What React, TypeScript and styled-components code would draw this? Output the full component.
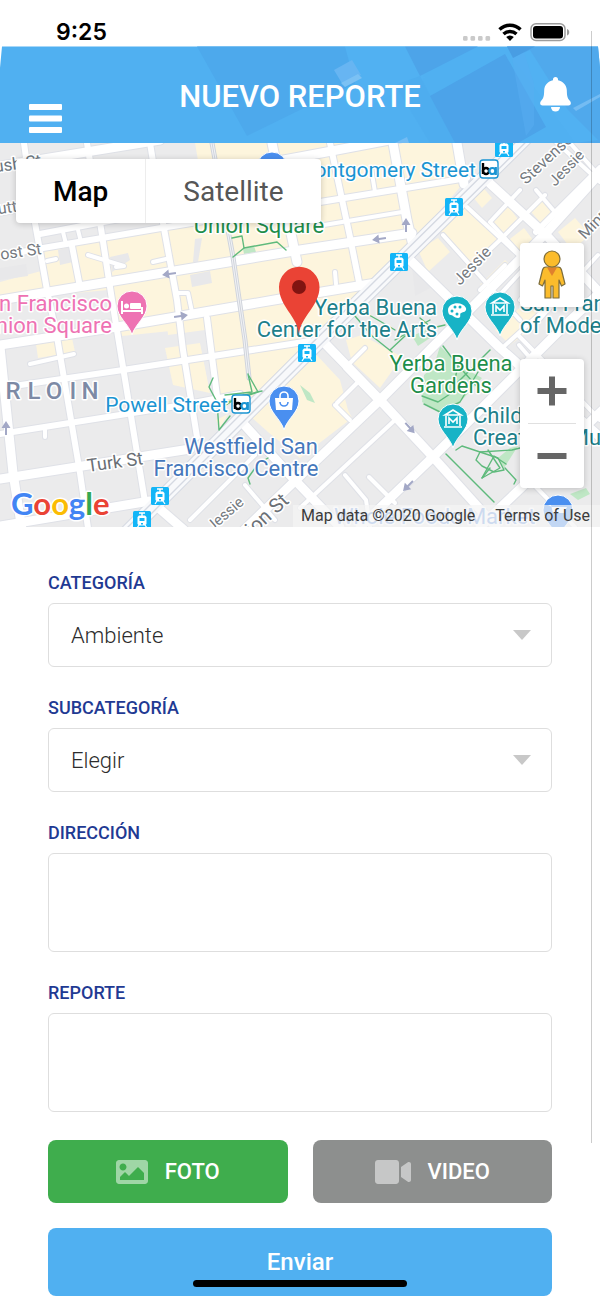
import React from "react";
import styled, { createGlobalStyle } from "styled-components";
import { FaImage, FaVideo } from "react-icons/fa";

const GlobalStyle = createGlobalStyle`
  * { box-sizing: border-box; }
  body { margin: 0; background: #fff; font-family: Roboto, "Liberation Sans", sans-serif; }
  button, select, textarea { font: inherit; }
`;

const Page = styled.div`
  position: relative;
  display: flex;
  flex-direction: column;
  min-height: 100vh;
`;

/* Status bar */
const StatusBar = styled.div`
  display: flex;
  align-items: center;
  justify-content: space-between;
  height: 46px;
  padding: 18px 30px 0 56px;
`;
const Clock = styled.time`
  font: 600 23px/28px Inter, sans-serif;
  color: #000;
`;
const StatusIcons = styled.svg`
  display: block;
  width: 108px;
  height: 20px;
`;

/* Header */
const Header = styled.header`
  position: relative;
  display: grid;
  grid-template-columns: 72px 1fr 72px;
  align-items: center;
  height: 97px;
  padding: 0 9px;
  overflow: hidden;
`;
const HeaderArt = styled.svg`
  position: absolute;
  inset: 0;
  width: 100%;
  height: 100%;
`;
const IconButton = styled.button<{ $low?: boolean }>`
  position: relative;
  display: flex;
  justify-content: center;
  align-self: ${(p) => (p.$low ? "end" : "center")};
  padding: ${(p) => (p.$low ? "10px 0" : "0")};
  border: 0;
  background: none;
`;
const Title = styled.h1`
  position: relative;
  margin: 0;
  padding-top: 4px;
  text-align: center;
  color: #fff;
  font-size: 31px;
  line-height: 40px;
  font-weight: 500;
`;

/* Map */
const MapArea = styled.section`
  position: relative;
  height: 384px;
  overflow: hidden;
  background: #ececec;
`;
const MapDrawing = styled.svg`
  display: block;
  width: 100%;
  height: 100%;
`;
const MapTypes = styled.div`
  position: absolute;
  top: 16px;
  left: 16px;
  display: flex;
  background: #fff;
  border-radius: 4px;
  box-shadow: 0 1px 6px rgba(0, 0, 0, 0.2);
`;
const MapType = styled.button<{ $on?: boolean }>`
  height: 64px;
  padding: 0 37px;
  border: 0;
  border-left: ${(p) => (p.$on ? "0" : "1px solid #ededed")};
  background: none;
  font-size: 28px;
  font-weight: ${(p) => (p.$on ? 500 : 400)};
  color: ${(p) => (p.$on ? "#000" : "#565656")};
`;
const MapTools = styled.div`
  position: absolute;
  top: 100px;
  right: 16px;
  display: flex;
  flex-direction: column;
  gap: 52px;
`;
const ToolCard = styled.div`
  display: flex;
  flex-direction: column;
  align-items: center;
  width: 64px;
  background: #fff;
  border-radius: 4px;
  box-shadow: 0 1px 6px rgba(0, 0, 0, 0.2);
`;
const ToolButton = styled.button`
  display: flex;
  align-items: center;
  justify-content: center;
  width: 64px;
  height: 64px;
  padding: 0;
  border: 0;
  background: none;
`;
const ToolRule = styled.hr`
  width: 48px;
  height: 1px;
  margin: 0;
  border: 0;
  background: #e0e0e0;
`;
const Attribution = styled.div`
  position: absolute;
  right: 0;
  bottom: 0;
  display: flex;
  gap: 20px;
  padding: 0 10px 0 8px;
  background: rgba(245, 245, 245, 0.7);
  font-size: 16px;
  line-height: 22px;
  color: #3c3c3c;
`;
const TermsLink = styled.a`
  color: inherit;
  text-decoration: none;
`;

/* Form */
const Form = styled.form`
  display: flex;
  flex-direction: column;
  gap: 28px;
  padding: 43px 48px 3px;
`;
const Field = styled.div`
  display: flex;
  flex-direction: column;
  gap: 7px;
`;
const Label = styled.label`
  color: #1f3a93;
  font-size: 18px;
  line-height: 26px;
  font-weight: 500;
`;
const SelectBox = styled.div`
  position: relative;
  display: flex;
`;
const Select = styled.select`
  flex: 1;
  height: 64px;
  padding: 0 22px;
  appearance: none;
  border: 1px solid #dedede;
  border-radius: 6px;
  background: #fff;
  color: #2c2c2c;
  font-size: 22px;
  font-weight: 300;
`;
const Caret = styled.svg`
  position: absolute;
  right: 21px;
  top: 27px;
  width: 18px;
  height: 10px;
  pointer-events: none;
`;
const TextArea = styled.textarea`
  display: block;
  height: 99px;
  padding: 16px 22px;
  resize: none;
  border: 1px solid #dedede;
  border-radius: 6px;
  background: #fff;
  color: #2c2c2c;
  font-size: 22px;
  font-weight: 300;
`;
const Actions = styled.div`
  display: flex;
  flex-direction: column;
  gap: 25px;
`;
const MediaRow = styled.div`
  display: grid;
  grid-template-columns: 1fr 1fr;
  gap: 25px;
`;
const ActionButton = styled.button<{ $color: string; $tall?: boolean }>`
  display: flex;
  align-items: center;
  justify-content: center;
  gap: 17px;
  height: ${(p) => (p.$tall ? 68 : 63)}px;
  border: 0;
  border-radius: 8px;
  background: ${(p) => p.$color};
  color: #fff;
  font-size: ${(p) => (p.$tall ? 24 : 22)}px;
  font-weight: 500;
  svg { color: rgba(255, 255, 255, 0.5); }
`;

const ScrollLine = styled.div`
  position: absolute;
  top: 31px;
  right: 8px;
  bottom: 156px;
  width: 1px;
  background: rgba(0, 0, 0, 0.2);
`;
const HomeIndicator = styled.div`
  position: fixed;
  left: 50%;
  bottom: 12px;
  width: 214px;
  height: 7px;
  border-radius: 4px;
  background: #000;
  transform: translateX(-50%);
`;

/* Map data: road centre lines */
const WIDE = [
  "M0 300L300 250L412 233", "M0 345L117 327L280 299L376 283", "M0 479L190 449",
  "M0 526L150 501", "M0 347L13 473L22 530", "M272 143L297 262", "M393 143L407 220L414 250",
  "M457 143L464 184", "M484 178L547 236L610 304", "M405 255L500 348L610 446",
  "M312 330L380 400L433 457L496 527", "M240 420L290 475L340 527", "M153 503L184 530",
  "M612 160L547 232L380 400L300 476L240 534", "M610 283L560 330L433 457L360 527",
  "M610 403L480 527", "M0 166L160 140", "M0 211L300 157L400 138",
];
const MEDIUM = [
  "M0 256L43 248L167 227L320 202L467 178", "M0 388L123 370L310 341", "M0 434L183 405L240 394",
  "M24 143L35 223L47 290L57 337L80 473L88 528", "M87 143L100 222L112 300L123 367L145 502",
  "M150 143L163 223L177 300L183 350L197 437", "M207 318L217 396", "M330 143L350 237L360 287",
  "M72 246L80 287", "M40 234L103 222L200 205", "M536 232L600 168",
];
const NARROW = [
  "M318 226L402 212", "M63 232L66 244", "M78 230L81 242",
  "M116 267L124 266L88 255", "M153 262L166 259", "M47 261L56 259", "M30 364L74 354", "M177 293L188 293L192 312",
  "M371 168L375 192", "M443 235L488 285L520 320", "M467 207L540 275L520 300",
  "M520 190L490 222L540 276", "M536 190L560 218", "M570 143L610 188", "M545 132L600 182",
  "M519 345L562 395", "M460 278L500 240L545 195", "M505 265L480 290", "M495 300L530 262",
  "M598 255L555 302L530 330", "M337 403L358 382", "M365 348L345 368L374 398",
  "M335 405L350 420", "M395 420L300 508", "M345 475L366 500L370 527", "M369 477L395 503",
  "M255 455L190 520", "M245 485L275 520", "M335 272L336 284", "M45 430L45 437",
  "M518 335L560 378L600 420", "M536 487L575 527", "M500 350L555 300",
];
const YELLOW = [
  "M195 143L458 143L466 180L408 248L245 410L220 398L216 392L205 330L168 335L160 240L206 207Z",
  "M43 250L206 223L206 320L118 325L108 290L0 300L0 282L45 270Z",
  "M165 348L200 343L210 393L173 385Z", "M36 344L72 338L75 352L38 358Z",
  "M118 325L178 316L180 330L122 336Z", "M312 350L340 380L348 410L352 418L300 458L268 432L248 414Z",
  "M346 340L362 335L402 357L380 388L352 362Z", "M437 226L468 206L498 240L470 270Z",
  "M418 250L438 238L450 252L428 272Z", "M472 196L480 184L492 198L482 208Z",
  "M490 218L508 206L520 222L500 236Z", "M528 208L540 196L556 220L545 228Z",
  "M506 242L524 228L536 244L518 258Z", "M558 232L575 218L590 235L572 250Z",
  "M480 285L505 260L515 270L490 298Z", "M495 330L545 285L530 330L510 345Z",
  "M216 420L228 414L220 428Z",
];
const GREY = [
  "M58 250L70 247L73 262L60 265Z", "M110 257L128 253L130 260L112 272Z", "M195 239L202 238L198 262L193 262Z",
  "M190 275L210 271L212 283L192 287Z", "M46 328L110 318L114 326L50 336Z", "M0 268L26 264L28 276L0 280Z",
  "M412 265L436 285L415 296Z",
];
const PATHS = [
  "M232 238L242 236L244 248L277 242L286 250", "M244 248L233 257",
  "M213 378L209 387L217 402L219 430L230 416", "M248 374L252 392L225 395", "M249 376L258 392L228 402",
  "M226 405L240 396L262 391", "M355 316L372 336L392 352", "M390 350L405 336", "M360 310L378 320L395 330",
  "M420 318L432 328L445 325", "M395 340L430 320", "M443 346L458 366L452 392", "M490 350L458 382",
  "M478 372L460 402L440 412L424 404", "M422 396L438 402L450 394", "M455 362L480 390",
  "M446 454L494 502", "M456 450L462 446L480 452L512 450L520 448", "M476 460L480 452L498 458L504 470L494 472L482 466Z",
  "M488 450L500 468L482 478L494 456L506 464", "M490 468L482 478", "M505 468L516 480L514 484",
  "M268 458L258 464L248 478L250 484",
];

type LabelSpec = { x: number; y: number; text: string; fill: string; anchor?: "start" | "end" | "middle"; size?: number; rotate?: number };
const TEAL = "#20808a";
const GREEN = "#1e8e4a";
const STREET = "#757a80";
const LABELS: LabelSpec[] = [
  { x: 42, y: 166, text: "Bush St", fill: "#6c7680", anchor: "end", size: 17, rotate: -8 },
  { x: 50, y: 207, text: "Sutter St", fill: STREET, anchor: "end", size: 16, rotate: -8 },
  { x: 42, y: 254, text: "Post St", fill: STREET, anchor: "end", size: 16, rotate: -8 },
  { x: 88, y: 472, text: "Turk St", fill: "#6a6f75", size: 18, rotate: -8 },
  { x: 526, y: 185, text: "Stevenson St", fill: STREET, size: 16, rotate: -43 },
  { x: 555, y: 187, text: "Jessie", fill: STREET, size: 15, rotate: -46 },
  { x: 460, y: 286, text: "Jessie", fill: STREET, size: 16, rotate: -46 },
  { x: 585, y: 240, text: "Minna St", fill: STREET, size: 16, rotate: -46 },
  { x: 212, y: 532, text: "Jessie", fill: STREET, size: 15, rotate: -41 },
  { x: 290, y: 502, text: "Mission St", fill: "#6a6f75", anchor: "end", size: 20, rotate: -43 },
  { x: 476, y: 177, text: "Montgomery Street", fill: "#1a94d2", anchor: "end", size: 21 },
  { x: 259, y: 233, text: "Union Square", fill: GREEN, anchor: "middle" },
  { x: 112, y: 311, text: "San Francisco", fill: "#ee72b3", anchor: "end" },
  { x: 112, y: 333, text: "Union Square", fill: "#ee72b3", anchor: "end" },
  { x: 228, y: 412, text: "Powell Street", fill: "#1a94d2", anchor: "end", size: 21 },
  { x: 437, y: 315, text: "Yerba Buena", fill: TEAL, anchor: "end" },
  { x: 437, y: 337, text: "Center for the Arts", fill: TEAL, anchor: "end" },
  { x: 451, y: 371, text: "Yerba Buena", fill: GREEN, anchor: "middle" },
  { x: 451, y: 393, text: "Gardens", fill: GREEN, anchor: "middle" },
  { x: 520, y: 311, text: "San Francisco Museum", fill: TEAL },
  { x: 520, y: 333, text: "of Modern Art", fill: TEAL },
  { x: 473, y: 423, text: "Children's", fill: TEAL },
  { x: 473, y: 445, text: "Creativity Museum", fill: TEAL },
  { x: 251, y: 454, text: "Westfield San", fill: "#4678bb", anchor: "middle" },
  { x: 236, y: 476, text: "Francisco Centre", fill: "#4678bb", anchor: "middle" },
  { x: 334, y: 524, text: "Whole Foods Market", fill: "#6f9ce2" },
];
const TRANSIT = [[504, 148], [454, 207], [399, 262], [307, 353], [160, 496], [142, 520]];
const ARROWS = [[169, 274, 172], [181, 316, -8], [379, 239, 172], [406, 225, -90], [6, 428, -90], [410, 428, 48], [408, 486, 135]];

function PlacePin({ x, y, color, children }: { x: number; y: number; color: string; children?: React.ReactNode }) {
  return (
    <g transform={`translate(${x} ${y})`}>
      <path d="M0 28C-3 17-15 10-15-1A15 15 0 1 1 15-1C15 10 3 17 0 28Z" fill={color} stroke="#fff" strokeWidth="1" />
      {children}
    </g>
  );
}

const Museum = () => (
  <g fill="none" stroke="#fff" strokeWidth="1.6">
    <path d="M-8-5L0-10L8-5ZM-7-4V6M7-4V6M-9 7H9" />
    <path d="M-4 4V-2L0 2L4-2V4" />
  </g>
);

const Bart = ({ x, y }: { x: number; y: number }) => (
  <g transform={`translate(${x} ${y})`}>
    <rect x="-9" y="-9" width="18" height="18" rx="3" fill="#fff" stroke="#1a94d2" strokeWidth="1.4" />
    <path d="M-6-6V5" stroke="#000" strokeWidth="2.4" />
    <circle cx="-3" cy="2" r="3" fill="none" stroke="#000" strokeWidth="2.4" />
    <circle cx="3.4" cy="2" r="3" fill="none" stroke="#1a94d2" strokeWidth="2.2" />
    <path d="M6.8-2V6" stroke="#1a94d2" strokeWidth="2.2" />
  </g>
);

function CityMap() {
  const roads = (list: string[], width: number, color: string) =>
    list.map((d) => <path key={d} d={d} stroke={color} strokeWidth={width} />);
  return (
    <MapDrawing viewBox="0 143 600 384" preserveAspectRatio="xMidYMid slice" role="img" aria-label="Mapa de San Francisco">
      <rect x="-600" y="143" width="1800" height="384" fill="#ebebec" />
      {YELLOW.map((d) => <path key={d} d={d} fill="#fdf5dd" />)}
      {GREY.map((d) => <path key={d} d={d} fill="#e8e8ea" />)}
      <g fill="#bfe7c5">
        <path d="M440 346L460 366L482 378L462 400L440 412L422 402L424 375L434 366Z" />
        <path d="M412 336L426 330L430 338L418 346Z" /><path d="M498 458L510 448L518 446L504 468Z" />
        <path d="M243 249L254 246L256 252L244 254Z" /><path d="M570 494L586 488L590 494L578 500Z" />
        <path d="M300 385L310 393L315 403L307 400Z" />
      </g>
      <g fill="none" strokeLinecap="round" strokeLinejoin="round">
        {roads(NARROW, 6, "#dfe1e7")}
        {roads(MEDIUM, 8, "#dfe1e7")}
        {roads(WIDE, 11, "#dfe1e7")}
        <path d="M530 133L307 353L125 535" stroke="#d5d9e2" strokeWidth="16" />
        {roads(NARROW, 4, "#fff")}
        {roads(MEDIUM, 6, "#fff")}
        {roads(WIDE, 9, "#fff")}
        <path d="M530 133L307 353L125 535" stroke="#f8f9fb" strokeWidth="14" />
        <path d="M527 131L304 351L122 533M532 136L309 356L127 538" stroke="#d5d9e2" strokeWidth="1.4" />
        <path d="M212 143L233 257L245 340L249 378" stroke="#d0d4dc" strokeWidth="5" />
        <path d="M212 143L233 257L245 340L249 378" stroke="#f1f2f5" strokeWidth="3" />
        <path d="M212 143L233 257L245 340L249 378" stroke="#d0d4dc" strokeWidth="1" />
        {roads(PATHS, 1.4, "#5fba7c")}
      </g>
      {ARROWS.map(([x, y, r]) => (
        <path key={`${x}-${y}`} transform={`translate(${x} ${y}) rotate(${r})`} d="M-7-1H0V-4.500L7 0L0 4.500V1H-7Z" fill="#a3a8c6" />
      ))}

      <g fontFamily="Roboto, sans-serif" stroke="#fff" strokeWidth="3" strokeLinejoin="round" paintOrder="stroke">
        {LABELS.map((l) => (
          <text
            key={`${l.text}-${l.x}-${l.y}`}
            transform={`translate(${l.x} ${l.y}) rotate(${l.rotate ?? 0})`}
            fill={l.fill}
            fontSize={l.size ?? 22}
            textAnchor={l.anchor ?? "start"}
          >
            {l.text}
          </text>
        ))}
        {["R", "L", "O", "I", "N"].map((c, i) => (
          <text key={c} x={[13, 34, 54, 73, 90][i]} y="399" textAnchor="middle" fontSize="24" fontWeight="500" fill="#7d8aa5">{c}</text>
        ))}
      </g>

      {TRANSIT.map(([x, y]) => (
        <g key={x} transform={`translate(${x} ${y})`}>
          <rect x="-9" y="-9" width="18" height="18" rx="1.5" fill="#13b5f7" />
          <path d="M-3-7H3M0-7V-4" stroke="#fff" strokeWidth="1.4" />
          <path fillRule="evenodd" d="M-3-4.500H3L4.500-3V4L3 5.500H-3L-4.500 4V-3ZM-2.500-2V1H2.500V-2ZM-1 3H1V4.500H-1Z" fill="#fff" />
          <path d="M-3 5L-5 8M3 5L5 8" stroke="#fff" strokeWidth="1.2" />
        </g>
      ))}
      <Bart x={489} y={169} />
      <Bart x={241} y={404} />
      <PlacePin x={272} y={168} color="#4a8ff0" />
      <PlacePin x={132} y={307} color="#ee72b3">
        <path d="M-10-6V7M-10 4H10M10 7V0" stroke="#fff" strokeWidth="2" fill="none" />
        <rect x="-2" y="-4" width="11" height="6" rx="1" fill="#fff" /><circle cx="-5.500" cy="-1" r="2.500" fill="#fff" />
      </PlacePin>
      <PlacePin x={457} y={312} color="#17b3c6">
        <path d="M-9-2C-9-9 5-12 9-4C10 0 6 0 4 1S5 6 1 6C-3 6-4 3-6 3S-9 1-9-2Z" fill="#fff" />
        <g fill="#17b3c6"><circle cx="-5" cy="-1" r="1.500" /><circle cx="-2" cy="-5" r="1.500" /><circle cx="3" cy="-5" r="1.500" /><circle cx="0" cy="2" r="1.500" /></g>
      </PlacePin>
      <PlacePin x={500} y={308} color="#17b3c6"><Museum /></PlacePin>
      <PlacePin x={453} y={420} color="#17b3c6"><Museum /></PlacePin>
      <PlacePin x={284} y={402} color="#4a8ff0">
        <path d="M-9-4H9L8 8H-8Z" fill="#fff" />
        <path d="M-4-4V-6A4 4 0 0 1 4-6V-4" stroke="#fff" strokeWidth="1.600" fill="none" />
        <path d="M-4 0A4 4 0 0 0 4 0" stroke="#4a8ff0" strokeWidth="1.600" fill="none" />
      </PlacePin>
      <PlacePin x={558} y={511} color="#4a8ff0">
        <path d="M-10-6H-7L-5 2H6L9-4H-6" fill="#fff" />
      </PlacePin>
      <path d="M299 334C297 316 279 306 279 287A20 20 0 0 1 319.500 287C319.500 306 301 316 299 334Z" fill="#ea4335" />
      <circle cx="299" cy="287" r="7" fill="#811411" />

      <text x="11" y="515" fontFamily="Lato, sans-serif" fontSize="31" fontWeight="700" stroke="#fff" strokeWidth="3" strokeLinejoin="round" paintOrder="stroke">
        <tspan fill="#4285f4">G</tspan><tspan fill="#ea4335">o</tspan><tspan fill="#fbbc04">o</tspan>
        <tspan fill="#4285f4">g</tspan><tspan fill="#34a853">l</tspan><tspan fill="#ea4335">e</tspan>
      </text>
    </MapDrawing>
  );
}

function SelectField({ id, label, value }: { id: string; label: string; value: string }) {
  return (
    <Field>
      <Label htmlFor={id}>{label}</Label>
      <SelectBox>
        <Select id={id} defaultValue={value}>
          <option value={value}>{value}</option>
        </Select>
        <Caret viewBox="0 0 18 10" aria-hidden="true"><path d="M0 0H18L9 10Z" fill="#c8c8c8" /></Caret>
      </SelectBox>
    </Field>
  );
}

function TextField({ id, label }: { id: string; label: string }) {
  return (
    <Field>
      <Label htmlFor={id}>{label}</Label>
      <TextArea id={id} />
    </Field>
  );
}

export default function App() {
  return (
    <Page>
      <GlobalStyle />
      <StatusBar>
        <Clock>9:25</Clock>
        <StatusIcons viewBox="462 22 108 20" aria-hidden="true">
          {[463, 470.500, 478, 485.500].map((x) => <rect key={x} x={x} y="36" width="4.600" height="4.800" rx="1.400" fill="#cacaca" />)}
          <g fill="none" stroke="#000" strokeWidth="3.400">
            <path d="M499.500 29.500A15 15 0 0 1 520.500 29.500" />
            <path d="M503.500 34A9.500 9.500 0 0 1 516.500 34" />
          </g>
          <path d="M506.200 37A5.500 5.500 0 0 1 513.800 37L510 41Z" fill="#000" />
          <rect x="531" y="23.800" width="34" height="16.600" rx="5" fill="none" stroke="#9c9c9c" strokeWidth="1.500" />
          <rect x="533" y="26" width="30" height="12.400" rx="3" fill="#000" />
          <path d="M567 29C570 30 570 34.500 567 35.500Z" fill="#9c9c9c" />
        </StatusIcons>
      </StatusBar>

      <Header>
        <HeaderArt viewBox="0 46 600 97" preserveAspectRatio="none" aria-hidden="true">
          <path d="M2 46.500H598L600 68V143H0V68Z" fill="#50b0f1" />
          <path d="M197 46.500H345L362 80L300 110L247 136Z" fill="#4da9ec" />
          <path d="M345 46.500H405L425 78L362 110Z" fill="#51b1f2" />
          <path d="M405 46.500H478L420 76Z" fill="#4da4e9" />
          <path d="M430 143L395 85L420 76L455 143Z" fill="#4eadef" />
          <path d="M430 96L505 54L546 127L518 143H455Z" fill="#4ca3e9" />
          <path d="M507 46.500H598L600 68V143H575L555 110Z" fill="#50a9ec" />
          <path d="M512 58L530 50L568 110L598 140L575 143Z" fill="#51b1f2" />
          <path d="M512 58L524 52L534 84V125L526 136Z" fill="#57aef1" opacity=".5" />
          <path d="M507 46.500H535L513 58Z" fill="#489de3" />
          <path d="M334 70L352 60L361 75L343 85Z" fill="#67b5f2" /><path d="M341 83L358 74L362 78L345 87Z" fill="#7bc1f4" />
          <path d="M573 108L600 94V97L576 111Z" fill="#74bcf3" />
          <path d="M395 143L407 137L409 143Z" fill="#72bcf4" />
        </HeaderArt>
        <IconButton $low aria-label="Menú">
          <svg width="33" height="29" viewBox="0 0 33 29" fill="#fff">
            <rect y="0" width="33" height="6" rx="1" /><rect y="11.500" width="33" height="6" rx="1" /><rect y="23" width="33" height="6" rx="1" />
          </svg>
        </IconButton>
        <Title>NUEVO REPORTE</Title>
        <IconButton aria-label="Notificaciones">
          <svg width="31" height="36" viewBox="0 0 31 36" fill="#fff">
            <path d="M13 3.200V2.500A2.500 2.500 0 0 1 18 2.500V3.200C23 4.200 26.500 8 26.800 13C27 18 27 21 30 24C31.500 25.800 31 28.500 28.500 28.500H2.500C0 28.500-.5 25.800 1 24C4 21 4 18 4.200 13C4.500 8 8 4.200 13 3.200Z" />
            <path d="M11 30H20A4.500 4.500 0 0 1 11 30Z" />
          </svg>
        </IconButton>
      </Header>

      <MapArea>
        <CityMap />
        <MapTypes>
          <MapType $on>Map</MapType>
          <MapType>Satellite</MapType>
        </MapTypes>
        <MapTools>
          <ToolCard>
            <ToolButton aria-label="Street View">
              <svg width="28" height="50" viewBox="0 0 28 50" stroke="#7d6d3c" strokeWidth="1.200" strokeLinejoin="round">
                <path d="M8 17H20C22 17 23 18 23.500 20L27 34L23.500 36L21 30V48H15V36H13V48H7V30L4.500 36L1 34L4.500 20C5 18 6 17 8 17Z" fill="#fbbc2c" />
                <path d="M9 17.500H19L14 26Z" fill="#e0812d" stroke="none" />
                <circle cx="14" cy="9" r="8" fill="#fbbc2c" />
              </svg>
            </ToolButton>
          </ToolCard>
          <ToolCard>
            <ToolButton aria-label="Acercar">
              <svg width="30" height="30" viewBox="0 0 30 30"><path d="M0.500 15H29.500M15 0.500V29.500" stroke="#666" strokeWidth="6" /></svg>
            </ToolButton>
            <ToolRule />
            <ToolButton aria-label="Alejar">
              <svg width="30" height="30" viewBox="0 0 30 30"><path d="M0.500 15H29.500" stroke="#666" strokeWidth="6" /></svg>
            </ToolButton>
          </ToolCard>
        </MapTools>
        <Attribution>
          <span>Map data ©2020 Google</span>
          <TermsLink href="#terms">Terms of Use</TermsLink>
        </Attribution>
      </MapArea>

      <Form onSubmit={(e) => e.preventDefault()}>
        <SelectField id="categoria" label="CATEGORÍA" value="Ambiente" />
        <SelectField id="subcategoria" label="SUBCATEGORÍA" value="Elegir" />
        <TextField id="direccion" label="DIRECCIÓN" />
        <TextField id="reporte" label="REPORTE" />
        <Actions>
          <MediaRow>
            <ActionButton type="button" $color="#3fad4d"><FaImage size={32} />FOTO</ActionButton>
            <ActionButton type="button" $color="#8d8f8e"><FaVideo size={36} />VIDEO</ActionButton>
          </MediaRow>
          <ActionButton type="submit" $color="#50b0f1" $tall>Enviar</ActionButton>
        </Actions>
      </Form>

      <ScrollLine />
      <HomeIndicator />
    </Page>
  );
}
